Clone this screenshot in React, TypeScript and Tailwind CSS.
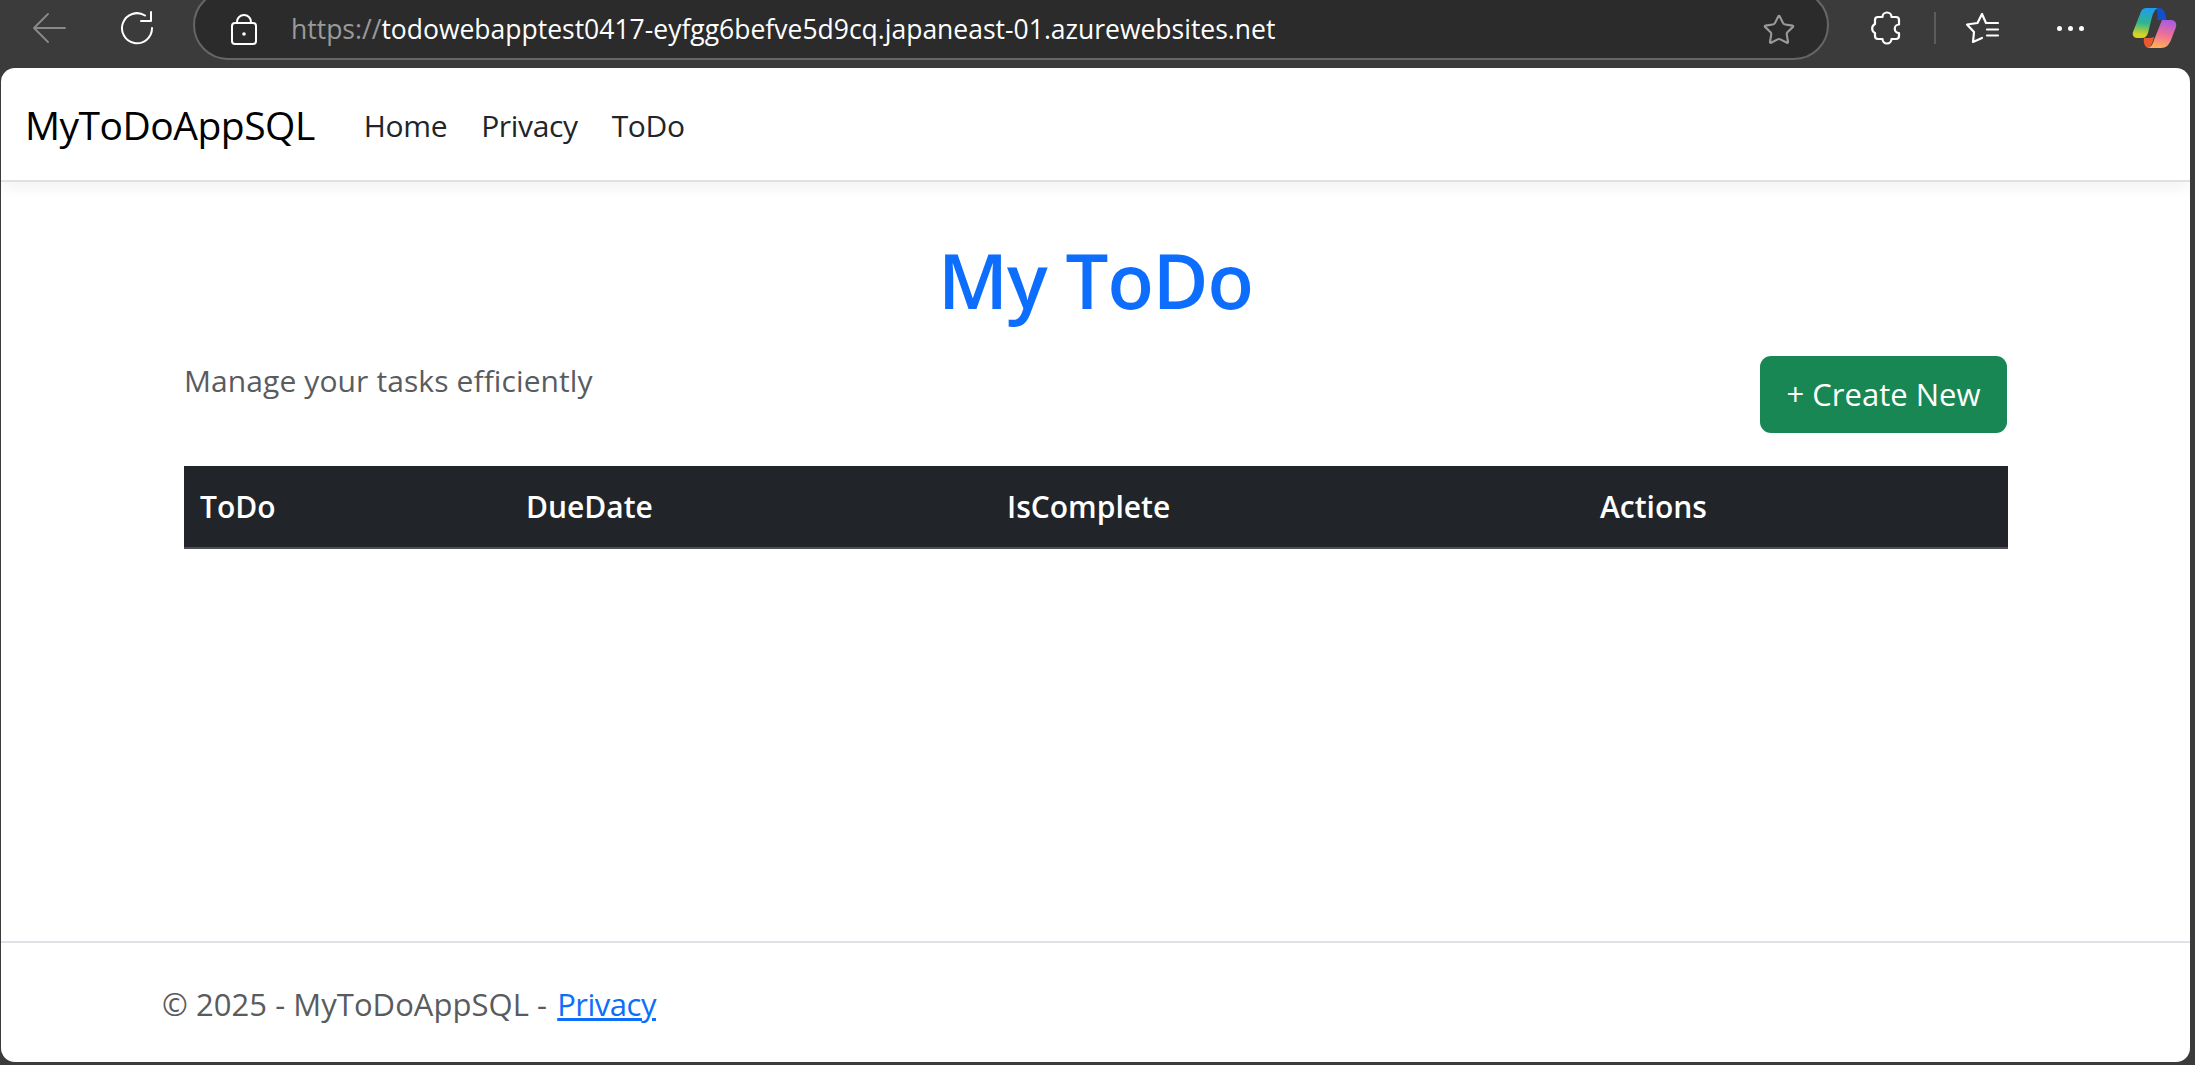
import React from "react";
import { Star } from "lucide-react";

const BackIcon = () => (
  <svg width="34" height="30" viewBox="0 0 34 30" fill="none" stroke="#8a8a8a" strokeWidth="1.8" strokeLinecap="round" strokeLinejoin="round">
    <path d="M16 1 2 15l14 14M2 15h31" />
  </svg>
);

const RefreshIcon = () => (
  <svg width="34" height="34" viewBox="0 0 34 34" fill="none" stroke="#fff" strokeWidth="2" strokeLinecap="round" strokeLinejoin="round">
    <path d="M25 4.5A15 15 0 1 0 32 17" />
    <path d="M31 1v9H21" />
  </svg>
);

const LockIcon = () => (
  <svg width="26" height="31" viewBox="0 0 26 31" fill="none" stroke="#fff" strokeWidth="2">
    <rect x="1" y="9" width="24" height="21" rx="3" />
    <path d="M6 9V8a7 7 0 0 1 14 0v1" />
    <circle cx="13" cy="20" r="1.8" fill="#fff" stroke="none" />
  </svg>
);

const PuzzleIcon = () => (
  <svg width="32" height="36" viewBox="0 0 32 36" fill="none" stroke="#fff" strokeWidth="2.2" strokeLinejoin="round">
    <path d="M8 7h4.5a4.5 4.5 0 0 1 9 0H26a3 3 0 0 1 3 3v4.5a4.2 4.2 0 0 0 0 8.5V26a3 3 0 0 1-3 3h-4.5a4.5 4.5 0 0 1-9 0H8a3 3 0 0 1-3-3v-3a5 5 0 0 1 0-9v-4a3 3 0 0 1 3-3Z" />
  </svg>
);

const FavoritesIcon = () => (
  <svg width="36" height="36" viewBox="0 0 36 36" fill="none" stroke="#fff" strokeWidth="2.2" strokeLinecap="round" strokeLinejoin="round">
    <path d="M22 13 18 4l-4.5 9L3 14.5l7 7.5-1 10 9-4" />
    <path d="M23 13h11M23 19.5h11M23 25.5h11" />
  </svg>
);

const CopilotLogo = () => (
  <svg width="46" height="42" viewBox="0 0 46 42">
    <defs>
      <linearGradient id="left" x1="0.5" y1="0" x2="0.4" y2="1">
        <stop offset="0" stopColor="#1f9cf0" />
        <stop offset="0.5" stopColor="#2fb58f" />
        <stop offset="0.9" stopColor="#d7d323" />
      </linearGradient>
      <linearGradient id="right" x1="0.6" y1="0" x2="0.4" y2="1">
        <stop offset="0" stopColor="#a95ce0" />
        <stop offset="0.5" stopColor="#ee6f9a" />
        <stop offset="1" stopColor="#ffb057" />
      </linearGradient>
    </defs>
    <path d="M24 1h3c4 0 6 3 7 9l.5 3H25c1-5 0-10-1-12Z" fill="#1450c8" />
    <path d="M14 1h12c-3 1-5 5-6 9l-4 16c-1 3-3 5-6 5H5c-3 0-5-3-4-6L8 7c1-4 3-6 6-6Z" fill="url(#left)" />
    <path d="M12 31h6l4-1c-1 4-2 8-5 11h-1c-3-1-5-5-4-10Z" fill="#ea5a2f" />
    <path d="M30 13h9c4 0 6 3 5 7l-5 13c-2 5-5 8-10 8H16c3-1 5-4 6-8l8-20Z" fill="url(#right)" />
  </svg>
);

const columns = [
  { label: "ToDo", width: "w-[326px]" },
  { label: "DueDate", width: "w-[481px]" },
  { label: "IsComplete", width: "w-[593px]" },
  { label: "Actions", width: "w-[424px]" },
];

export default function App() {
  return (
    <div className="flex h-[1065px] flex-col overflow-hidden bg-[#3b3b3b] font-['Open_Sans',sans-serif]">
      {/* browser toolbar */}
      <div className="flex h-[68px] shrink-0 items-center pb-[12px]">
        <div className="ml-[32px] flex">
          <BackIcon />
        </div>
        <div className="ml-[54px] flex">
          <RefreshIcon />
        </div>
        <div className="ml-[39px] mt-[-7px] flex h-[70px] w-[1636px] items-center rounded-full border-2 border-[#666666] bg-[#2b2b2b] pt-[10px]">
          <div className="ml-[36px] flex">
            <LockIcon />
          </div>
          <span className="ml-[34px] text-[26.5px] text-[#9a9a9a]">
            https://<span className="text-white">todowebapptest0417-eyfgg6befve5d9cq.japaneast-01.azurewebsites.net</span>
          </span>
          <Star className="ml-auto mr-[31px] h-[34px] w-[34px] text-[#9a9a9a]" strokeWidth={1.5} />
        </div>
        <div className="ml-[41px] flex">
          <PuzzleIcon />
        </div>
        <div className="ml-[32px] h-[32px] w-[2px] bg-[#5c5c5c]" />
        <div className="ml-[28px] flex">
          <FavoritesIcon />
        </div>
        <div className="ml-[57px] flex gap-[6px]">
          <span className="h-[5px] w-[5px] rounded-full bg-white" />
          <span className="h-[5px] w-[5px] rounded-full bg-white" />
          <span className="h-[5px] w-[5px] rounded-full bg-white" />
        </div>
        <div className="ml-[48px] flex">
          <CopilotLogo />
        </div>
      </div>

      {/* page */}
      <div className="ml-px mr-[5px] flex h-[994px] flex-col overflow-hidden rounded-[14px] bg-white">
        <nav className="flex h-[114px] shrink-0 items-center border-b-2 border-[#dee2e6] pl-[24px] pt-[2px] shadow-[0_6px_14px_rgba(0,0,0,0.05)]">
          <a className="text-[39px] tracking-[-0.5px] text-black">MyToDoAppSQL</a>
          <div className="ml-[49px] flex gap-[34px] text-[30px] tracking-[-0.35px] text-[#212529]">
            <a>Home</a>
            <a>Privacy</a>
            <a>ToDo</a>
          </div>
        </nav>

        <main className="flex-1 px-[183px]">
          <h1 className="mt-[58px] text-center text-[76px] leading-[80px] font-semibold tracking-[-1px] text-[#0d6efd]">My ToDo</h1>
          <div className="mt-[36px] flex items-start justify-between">
            <p className="mt-[5px] text-[30px] leading-[40px] tracking-[0.1px] text-[#595c5f]">Manage your tasks efficiently</p>
            <button
              type="button"
              className="ml-auto flex h-[77px] w-[247px] items-center justify-center rounded-[11px] bg-[#198754] text-[31px] text-white"
            >
              + Create New
            </button>
          </div>
          <table className="mt-[33px] w-[1824px] table-fixed border-collapse">
            <thead>
              <tr className="h-[82px] border-b-2 border-[#4d5154] bg-[#212529] text-left text-[30px] text-white">
                {columns.map((col) => (
                  <th key={col.label} className={`${col.width} px-[16px] font-semibold`}>
                    {col.label}
                  </th>
                ))}
              </tr>
            </thead>
          </table>
        </main>

        <footer className="flex h-[121px] shrink-0 items-center border-t-2 border-[#dee2e6] pl-[161px] pt-[4px] text-[31px] text-[#595c5f]">
          <span className="tracking-[0.05px]">
            © 2025 - MyToDoAppSQL - <a className="ml-[2px] tracking-[-0.5px] text-[#0d6efd] underline">Privacy</a>
          </span>
        </footer>
      </div>
    </div>
  );
}
